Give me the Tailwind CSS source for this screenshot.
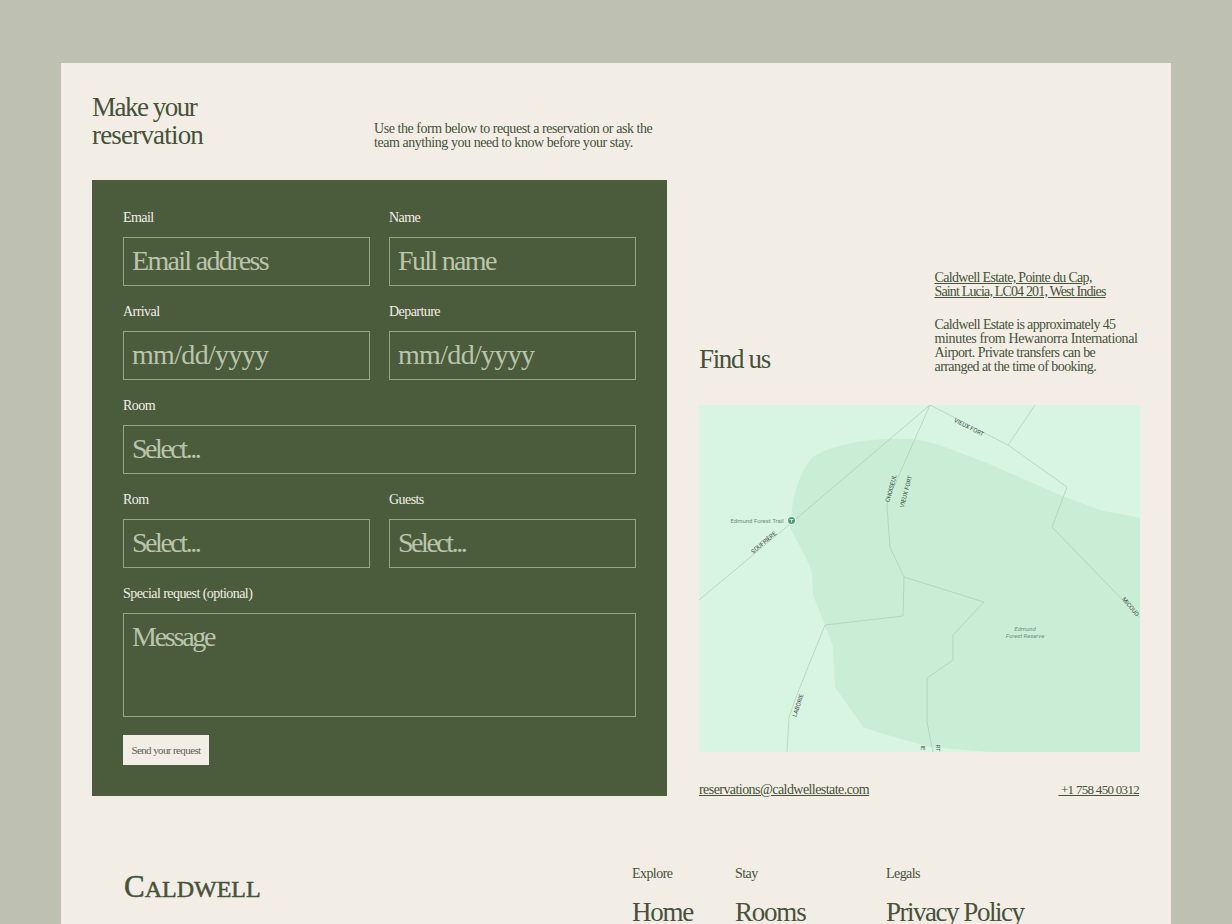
<!DOCTYPE html>
<html lang="en">
<head>
<meta charset="UTF-8">
<meta name="viewport" content="width=device-width, initial-scale=1.0">
<script src="https://cdn.jsdelivr.net/npm/@tailwindcss/browser@4"></script>
<title>Caldwell - Reservation</title>
</head>
<body class="bg-[#bec0b1] h-[924px] overflow-hidden font-['Liberation_Serif',serif] text-[#47523a]">
  <div class="mx-[61px] mt-[63px] bg-[#f2eee6] px-[31px] pt-[29px] pb-10">
    <div class="flex gap-[32px]">
      <!-- left col -->
      <div class="w-[575px]">
        <div class="flex items-end h-[58px]">
          <h1 class="w-[282px] text-[27px] leading-[28px] pb-px"><span class="tracking-[-0.055em]">Make your</span><br><span class="tracking-[-0.03em]">reservation</span></h1>
          <p class="text-[14px] leading-[14px] tracking-[-0.032em]">Use the form below to request a reservation or ask the<br>team anything you need to know before your stay.</p>
        </div>
        <form class="mt-[30px] bg-[#4a5c3b] p-[31px] pt-[30px] text-[#f2eee6] h-[616px]">
          <div class="grid grid-cols-2 gap-x-[19px] gap-y-[18px]">
            <label class="block">
              <span class="block text-[14px] leading-[16px] tracking-[-0.04em]">Email</span>
              <input class="mt-[11px] block w-full h-[49px] border border-[#94a688] px-2 pb-[2px] text-[28px] tracking-[-0.06em] placeholder:text-[#bbc4ac] outline-none" placeholder="Email address">
            </label>
            <label class="block">
              <span class="block text-[14px] leading-[16px] tracking-[-0.04em]">Name</span>
              <input class="mt-[11px] block w-full h-[49px] border border-[#94a688] px-2 pb-[2px] text-[28px] tracking-[-0.06em] placeholder:text-[#bbc4ac] outline-none" placeholder="Full name">
            </label>
            <label class="block">
              <span class="block text-[14px] leading-[16px] tracking-[-0.04em]">Arrival</span>
              <input class="mt-[11px] block w-full h-[49px] border border-[#94a688] px-2 pb-[2px] text-[28px] tracking-[-0.024em] placeholder:text-[#bbc4ac] outline-none" placeholder="mm/dd/yyyy">
            </label>
            <label class="block">
              <span class="block text-[14px] leading-[16px] tracking-[-0.04em]">Departure</span>
              <input class="mt-[11px] block w-full h-[49px] border border-[#94a688] px-2 pb-[2px] text-[28px] tracking-[-0.024em] placeholder:text-[#bbc4ac] outline-none" placeholder="mm/dd/yyyy">
            </label>
            <label class="block col-span-2">
              <span class="block text-[14px] leading-[16px] tracking-[-0.04em]">Room</span>
              <input class="mt-[11px] block w-full h-[49px] border border-[#94a688] px-2 pb-[2px] text-[28px] tracking-[-0.088em] placeholder:text-[#bbc4ac] outline-none" placeholder="Select...">
            </label>
            <label class="block">
              <span class="block text-[14px] leading-[16px] tracking-[-0.04em]">Rom</span>
              <input class="mt-[11px] block w-full h-[49px] border border-[#94a688] px-2 pb-[2px] text-[28px] tracking-[-0.088em] placeholder:text-[#bbc4ac] outline-none" placeholder="Select...">
            </label>
            <label class="block">
              <span class="block text-[14px] leading-[16px] tracking-[-0.04em]">Guests</span>
              <input class="mt-[11px] block w-full h-[49px] border border-[#94a688] px-2 pb-[2px] text-[28px] tracking-[-0.088em] placeholder:text-[#bbc4ac] outline-none" placeholder="Select...">
            </label>
            <label class="block col-span-2">
              <span class="block text-[14px] leading-[16px] tracking-[-0.04em]">Special request (optional)</span>
              <textarea class="mt-[11px] block w-full h-[104px] border border-[#94a688] px-2 pt-[3px] text-[28px] leading-[40px] tracking-[-0.08em] placeholder:text-[#bbc4ac] outline-none resize-none" placeholder="Message"></textarea>
            </label>
          </div>
          <button type="button" class="mt-[18px] block w-[86px] h-[30px] bg-[#f2eee6] text-[#5b6350] text-[11px] tracking-[-0.055em]">Send your request</button>
        </form>
      </div>
      <!-- right col -->
      <div class="w-[441px] flex flex-col justify-end -mb-[2px]">
        <div class="flex items-end">
          <h2 class="w-[235.500px] text-[27px] leading-[32px] tracking-[-0.05em] -mb-[1px]">Find us</h2>
          <div class="text-[14px] leading-[14px] tracking-[-0.04em] whitespace-nowrap">
            <a class="underline block tracking-[-0.048em]">Caldwell Estate, Pointe du Cap,<br><span class="tracking-[-0.06em]">Saint Lucia, LC04 201, West Indies</span></a>
            <p class="mt-[19px]"><span class="tracking-[-0.045em]">Caldwell Estate is approximately 45</span><br><span class="tracking-[-0.025em]">minutes from Hewanorra International</span><br>Airport. Private transfers can be<br>arranged at the time of booking.</p>
          </div>
        </div>
        <svg class="mt-[31px] block w-[441px] h-[347px]" viewBox="699 405 441 347" fill="none">
          <rect x="699" y="405" width="441" height="347" fill="#d8f5e2"/>
          <path fill="#c9eed5" d="M1140 518C1125 514 1110 513 1100 510L1067 498 987 463C960 453 940 444 920 440C885 436 835 442 813 457C800 470 792 495 790 528C796 540 808 560 812 572L813 595 825 625 833 647 835 687 863 727 880 733 930 747 990 752 1140 752Z"/>
          <g stroke="#a9c4b2" stroke-width=".6">
            <path d="M699 600 790 524 930 405 1008 445 1067 487 1052 527 1140 618"/>
            <path d="M1035 405 1008 445"/>
            <path d="M930 405 888 500 887 507 890 547 904 577 984 602 953 635 953 660 927 678 927 722 933 752"/>
            <path d="M904 577 903 616 825 625 798 692 789 717 787 752"/>
          </g>
          <g font-family="Roboto, sans-serif" font-size="6" fill="#3f4c45" text-anchor="middle">
            <text transform="translate(968 429) rotate(27)">VIEUX FORT</text>
            <text transform="translate(893 489) rotate(-75)">CHOISEUL</text>
            <text transform="translate(908 492) rotate(-75)">VIEUX FORT</text>
            <text transform="translate(765 544) rotate(-40)">SOUFRIÈRE</text>
            <text transform="translate(1129 608) rotate(50)">MICOUD</text>
            <text transform="translate(800 706) rotate(-72)">LABORIE</text>
            <text transform="translate(921 748) rotate(90)">IE</text>
            <text transform="translate(936 748) rotate(90)">RT</text>
            <text x="757" y="523" fill="#6b8f7c">Edmund Forest Trail</text>
            <text x="1025" y="631" font-style="italic" fill="#6b8f7c">Edmund</text>
            <text x="1025" y="638" font-style="italic" fill="#6b8f7c">Forest Reserve</text>
          </g>
          <circle cx="791.500" cy="520.500" r="4.500" fill="#eaf6ee"/>
          <circle cx="791.500" cy="520.500" r="3.500" fill="#4f9d75"/>
          <path d="M789.500 519.500h4M791.500 519v3.500" stroke="#d8f5e2" stroke-width=".8"/>
        </svg>
        <div class="mt-[30px] flex justify-between text-[14px] leading-[16px] tracking-[-0.04em]">
          <a class="underline">reservations@caldwellestate.com</a>
          <a class="underline text-[13px] tracking-[-0.054em] mr-px">&nbsp;+1 758 450 0312</a>
        </div>
      </div>
    </div>
    <footer class="mt-[70px] pl-[31px] flex">
      <div class="w-[509px] pt-[3px] pl-px text-[24px] leading-[36px] tracking-[0em] [-webkit-text-stroke:0.5px_#47523a]"><span class="text-[31px]">C</span>ALDWELL</div>
      <div class="w-[103px]">
        <p class="text-[14px] leading-[16px] tracking-[-0.04em]">Explore</p>
        <p class="mt-[14px] text-[27px] leading-[32px] tracking-[-0.045em]">Home</p>
      </div>
      <div class="w-[151px]">
        <p class="text-[14px] leading-[16px] tracking-[-0.04em]">Stay</p>
        <p class="mt-[14px] text-[27px] leading-[32px] tracking-[-0.045em]">Rooms</p>
      </div>
      <div>
        <p class="text-[14px] leading-[16px] tracking-[-0.04em]">Legals</p>
        <p class="mt-[14px] text-[27px] leading-[32px] tracking-[-0.055em]">Privacy Policy</p>
      </div>
    </footer>
  </div>
</body>
</html>
